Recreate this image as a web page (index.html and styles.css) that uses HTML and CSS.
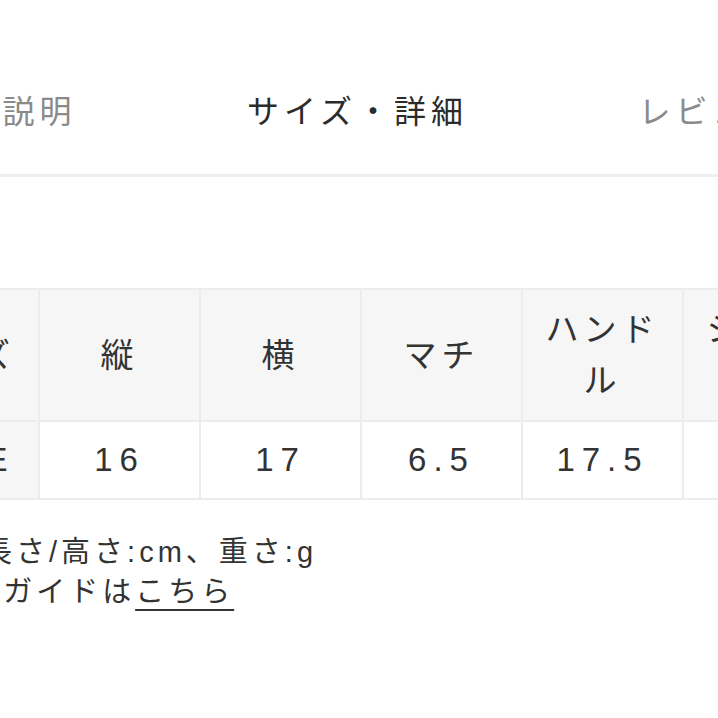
FILE: index.html
```html
<!DOCTYPE html>
<html lang="ja">
<head>
<meta charset="utf-8">
<link rel="stylesheet" href="styles.css">
</head>
<body>
<div class="page">
  <nav class="tabs">
    <div class="tab">商品説明</div>
    <div class="tab active">サイズ・詳細</div>
    <div class="tab">レビュー</div>
  </nav>
  <section class="detail">
    <table class="size-table">
      <thead>
        <tr>
          <th>サイズ</th>
          <th>縦</th>
          <th>横</th>
          <th>マチ</th>
          <th>ハンドル</th>
          <th>ショルダー</th>
          <th>重さ</th>
        </tr>
      </thead>
      <tbody>
        <tr>
          <th class="row-head">FREE</th>
          <td>16</td>
          <td>17</td>
          <td>6.5</td>
          <td>17.5</td>
          <td>120</td>
          <td>250</td>
        </tr>
      </tbody>
    </table>
    <p class="note">単位:長さ/高さ:cm、重さ:g<br>サイズガイドは<a class="link" href="#">こちら</a></p>
  </section>
</div>
</body>
</html>
```
FILE: styles.css
```css
html, body {
  margin: 0;
  padding: 0;
  background: #ffffff;
  overflow: hidden;
}
body {
  font-family: "Liberation Sans", "Noto Sans CJK JP", sans-serif;
  color: #333333;
}
.page {
  width: 718px;
  height: 718px;
  overflow: hidden;
}
.tabs {
  display: flex;
  width: 1065px;
  margin-left: -175px;
  padding-top: 80px;
  padding-bottom: 30px;
  border-bottom: 3px solid #efefef;
}
.tab {
  flex: 1;
  text-align: center;
  font-size: 32px;
  line-height: 64px;
  letter-spacing: 5px;
  color: #8a8a8a;
}
.tab.active {
  color: #2b2b2b;
}
.detail {
  margin-top: 111px;
  margin-left: -123px;
}
.size-table {
  border-collapse: collapse;
  table-layout: fixed;
  width: 1127px;
}
.size-table th,
.size-table td {
  width: 147px;
  border: 2px solid #ececec;
  padding: 14px 6px;
  text-align: center;
  font-size: 33px;
  line-height: 48px;
  font-weight: normal;
  letter-spacing: 5px;
  color: #333333;
}
.size-table thead th {
  background: #f6f6f6;
  padding: 14px 6px;
  line-height: 51px;
}
.size-table .row-head {
  background: #f6f6f6;
}
.size-table td {
  background: #ffffff;
  letter-spacing: 7px;
}
.note {
  margin: 32px 0 0 0;
  padding-left: 28px;
  font-size: 29px;
  line-height: 40px;
  letter-spacing: 4px;
  color: #333333;
}
.link {
  color: #333333;
  text-decoration: underline;
  text-underline-offset: 7px;
  text-decoration-thickness: 2px;
}
```
